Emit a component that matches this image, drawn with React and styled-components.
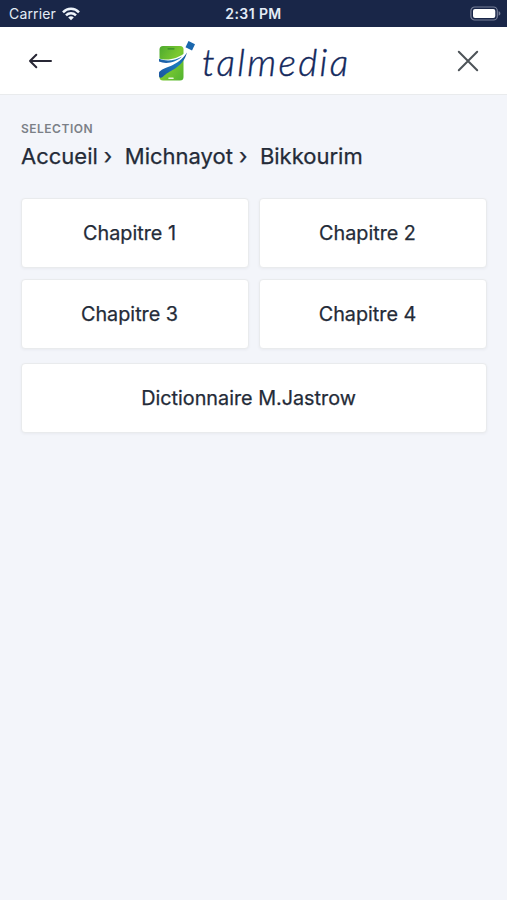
import React from 'react';
import styled, { createGlobalStyle, ThemeProvider } from 'styled-components';

const theme = {
	color: {
		navy: '#192648',
		ink: '#242b38',
		gray: '#7b8087',
		background: '#f3f5fa',
		line: '#e9ebed',
		logo: '#12285c',
	},
	font: `Inter, 'Liberation Sans', sans-serif`,
};

const GlobalStyle = createGlobalStyle`
	*, *::before, *::after {
		box-sizing: border-box;
	}

	body {
		margin: 0;
		background: #f3f5fa;
	}
`;

const StyledScreen = styled.div`
	min-height: 100vh;
	background: ${({ theme }) => theme.color.background};
	color: ${({ theme }) => theme.color.ink};
	font-family: ${({ theme }) => theme.font};
`;

const StyledStatusBar = styled.div`
	height: 27px;
	padding: 0 6px 0 9px;
	display: grid;
	grid-template-columns: 1fr auto 1fr;
	align-items: center;
	background: ${({ theme }) => theme.color.navy};
	color: #e4ecf6;
	font-size: 14px;
	line-height: 27px;
`;

const StyledCarrier = styled.div`
	display: flex;
	align-items: center;
	gap: 6px;
	letter-spacing: 0.15px;
`;

const StyledTime = styled.span`
	margin-right: 3px;
	font-size: 14px;
	font-weight: 600;
	letter-spacing: 0.4px;
`;

const StyledBattery = styled.svg`
	justify-self: end;
`;

const StyledHeader = styled.header`
	height: 68px;
	padding: 0 26px 0 27px;
	display: flex;
	align-items: center;
	justify-content: space-between;
	background: white;
	border-bottom: 1px solid ${({ theme }) => theme.color.line};
`;

const StyledIconButton = styled.button`
	display: flex;
	padding: 0;
	border: 0;
	background: none;
`;

const StyledLogo = styled.div`
	display: flex;
	align-items: center;
	gap: 7px;
	height: 44px;
`;

const StyledWordmark = styled.span`
	width: 148px;
	padding-top: 3px;
	color: ${({ theme }) => theme.color.logo};
	font-family: Lato, sans-serif;
	font-size: 37px;
	font-style: italic;
	font-weight: 300;
	line-height: 44px;
	letter-spacing: 2.3px;
	white-space: nowrap;
	-webkit-text-stroke: 0.4px ${({ theme }) => theme.color.logo};
`;

const StyledContent = styled.main`
	padding: 27px 20px 0 21px;
`;

const StyledLabel = styled.p`
	margin: 0;
	color: ${({ theme }) => theme.color.gray};
	font-size: 12px;
	font-weight: 600;
	line-height: 14px;
	letter-spacing: 0.5px;
`;

const StyledBreadcrumb = styled.nav`
	display: flex;
	margin-top: 6px;
	font-size: 22px;
	font-weight: 400;
	line-height: 28px;
	-webkit-text-stroke: 0.25px ${({ theme }) => theme.color.ink};
`;

const StyledCrumb = styled.span`
	&:not(:last-child)::after {
		content: '›';
		margin: 0 12.5px 0 6px;
	}
`;

const StyledGrid = styled.div`
	display: grid;
	grid-template-columns: 1fr 1fr;
	gap: 11px 10px;
	margin: 28px 0 14px;
`;

const StyledCard = styled.button`
	width: 100%;
	height: 70px;
	padding: 0 11px 0 0;
	border: 1px solid ${({ theme }) => theme.color.line};
	border-radius: 4px;
	background: white;
	box-shadow: 0 1px 3px rgba(30, 40, 60, 0.05);
	color: inherit;
	font-family: inherit;
	font-size: 19.8px;
	font-weight: 400;
	text-align: center;
	-webkit-text-stroke: 0.25px ${({ theme }) => theme.color.ink};
`;

const WifiIcon = () => (
	<svg width="18" height="14" viewBox="0 0 18 14" fill="none" stroke="#eef4fb" strokeWidth="2.5">
		<path d="M1 5.3C5.4 0.7 12.6 0.7 17 5.3" />
		<path d="M4 8.4C6.8 5.6 11.2 5.6 14 8.4" />
		<path d="M6.2 10.4C7.8 8.9 10.2 8.9 11.8 10.4L9 13.3Z" fill="#eef4fb" stroke="none" />
	</svg>
);

const BatteryIcon = () => (
	<StyledBattery width="31" height="15" viewBox="0 0 31 15" fill="none">
		<rect x="0.9" y="1" width="26.4" height="13" rx="3.8" stroke="#777f98" strokeWidth="1.2" />
		<rect x="3" y="3" width="22.3" height="9" rx="2" fill="white" />
		<path d="M28.6 5.3C31 6 31 9 28.6 9.7Z" fill="#777f98" />
	</StyledBattery>
);

const BackIcon = () => (
	<svg width="26" height="20" viewBox="0 0 26 20" fill="none" stroke="#282735" strokeWidth="2" strokeLinecap="round" strokeLinejoin="round">
		<path d="M24 10H3M9.3 3.7L3 10L9.3 16.3" />
	</svg>
);

const CloseIcon = () => (
	<svg width="26" height="26" viewBox="0 0 26 26" fill="none" stroke="#4d5358" strokeWidth="2" strokeLinecap="round">
		<path d="M3.8 3.8L22.2 22.2M22.2 3.8L3.8 22.2" />
	</svg>
);

const LogoMark = () => (
	<svg width="37" height="42" viewBox="0 0 37 42">
		<defs>
			<linearGradient id="leaf" x1="0" y1="0" x2="1" y2="1">
				<stop offset="0" stopColor="#4da92f" />
				<stop offset="0.5" stopColor="#7cc930" />
				<stop offset="1" stopColor="#50b331" />
			</linearGradient>
			<linearGradient id="wave" x1="0" y1="1" x2="1" y2="0">
				<stop offset="0" stopColor="#1c539f" />
				<stop offset="0.6" stopColor="#1979bd" />
				<stop offset="1" stopColor="#164c94" />
			</linearGradient>
		</defs>
		<rect x="1.5" y="6" width="24" height="34.5" rx="3.5" fill="url(#leaf)" />
		<path d="M10 8.8H16" stroke="#358c2a" strokeWidth="1.2" strokeLinecap="round" />
		<path d="M0 18C8 21 18 20 29 11.5C26 20 20 26 13 28.5C7 30 3 31 0 34Z" fill="white" />
		<path d="M1 18.7C9 21.8 17 20.5 24 16.5C18 22.5 8 24.5 1 21.5Z" fill="url(#wave)" />
		<path d="M1 32.5C4 27 20 27 29 12.5C25 27 14 29.5 7.5 34.5C5 36.5 2.5 39.5 1 36.5Z" fill="url(#wave)" />
		<path d="M11 38.2H15" stroke="#e8f7dc" strokeWidth="1.6" strokeLinecap="round" />
		<path d="M30.5 1L37 4.2L34 10.4L27.5 7.2Z" fill="#1a67ad" />
	</svg>
);

const crumbs = ['Accueil', 'Michnayot', 'Bikkourim'];
const chapters = ['Chapitre 1', 'Chapitre 2', 'Chapitre 3', 'Chapitre 4'];

const App = () => (
	<ThemeProvider theme={theme}>
		<GlobalStyle />
		<StyledScreen>
			<StyledStatusBar>
				<StyledCarrier>
					Carrier
					<WifiIcon />
				</StyledCarrier>
				<StyledTime>2:31 PM</StyledTime>
				<BatteryIcon />
			</StyledStatusBar>
			<StyledHeader>
				<StyledIconButton aria-label="Retour">
					<BackIcon />
				</StyledIconButton>
				<StyledLogo>
					<LogoMark />
					<StyledWordmark>talmedia</StyledWordmark>
				</StyledLogo>
				<StyledIconButton aria-label="Fermer">
					<CloseIcon />
				</StyledIconButton>
			</StyledHeader>
			<StyledContent>
				<StyledLabel>SELECTION</StyledLabel>
				<StyledBreadcrumb>
					{crumbs.map((crumb) => (
						<StyledCrumb key={crumb}>{crumb}</StyledCrumb>
					))}
				</StyledBreadcrumb>
				<StyledGrid>
					{chapters.map((chapter) => (
						<StyledCard key={chapter}>{chapter}</StyledCard>
					))}
				</StyledGrid>
				<StyledCard>Dictionnaire M.Jastrow</StyledCard>
			</StyledContent>
		</StyledScreen>
	</ThemeProvider>
);

export default App;
